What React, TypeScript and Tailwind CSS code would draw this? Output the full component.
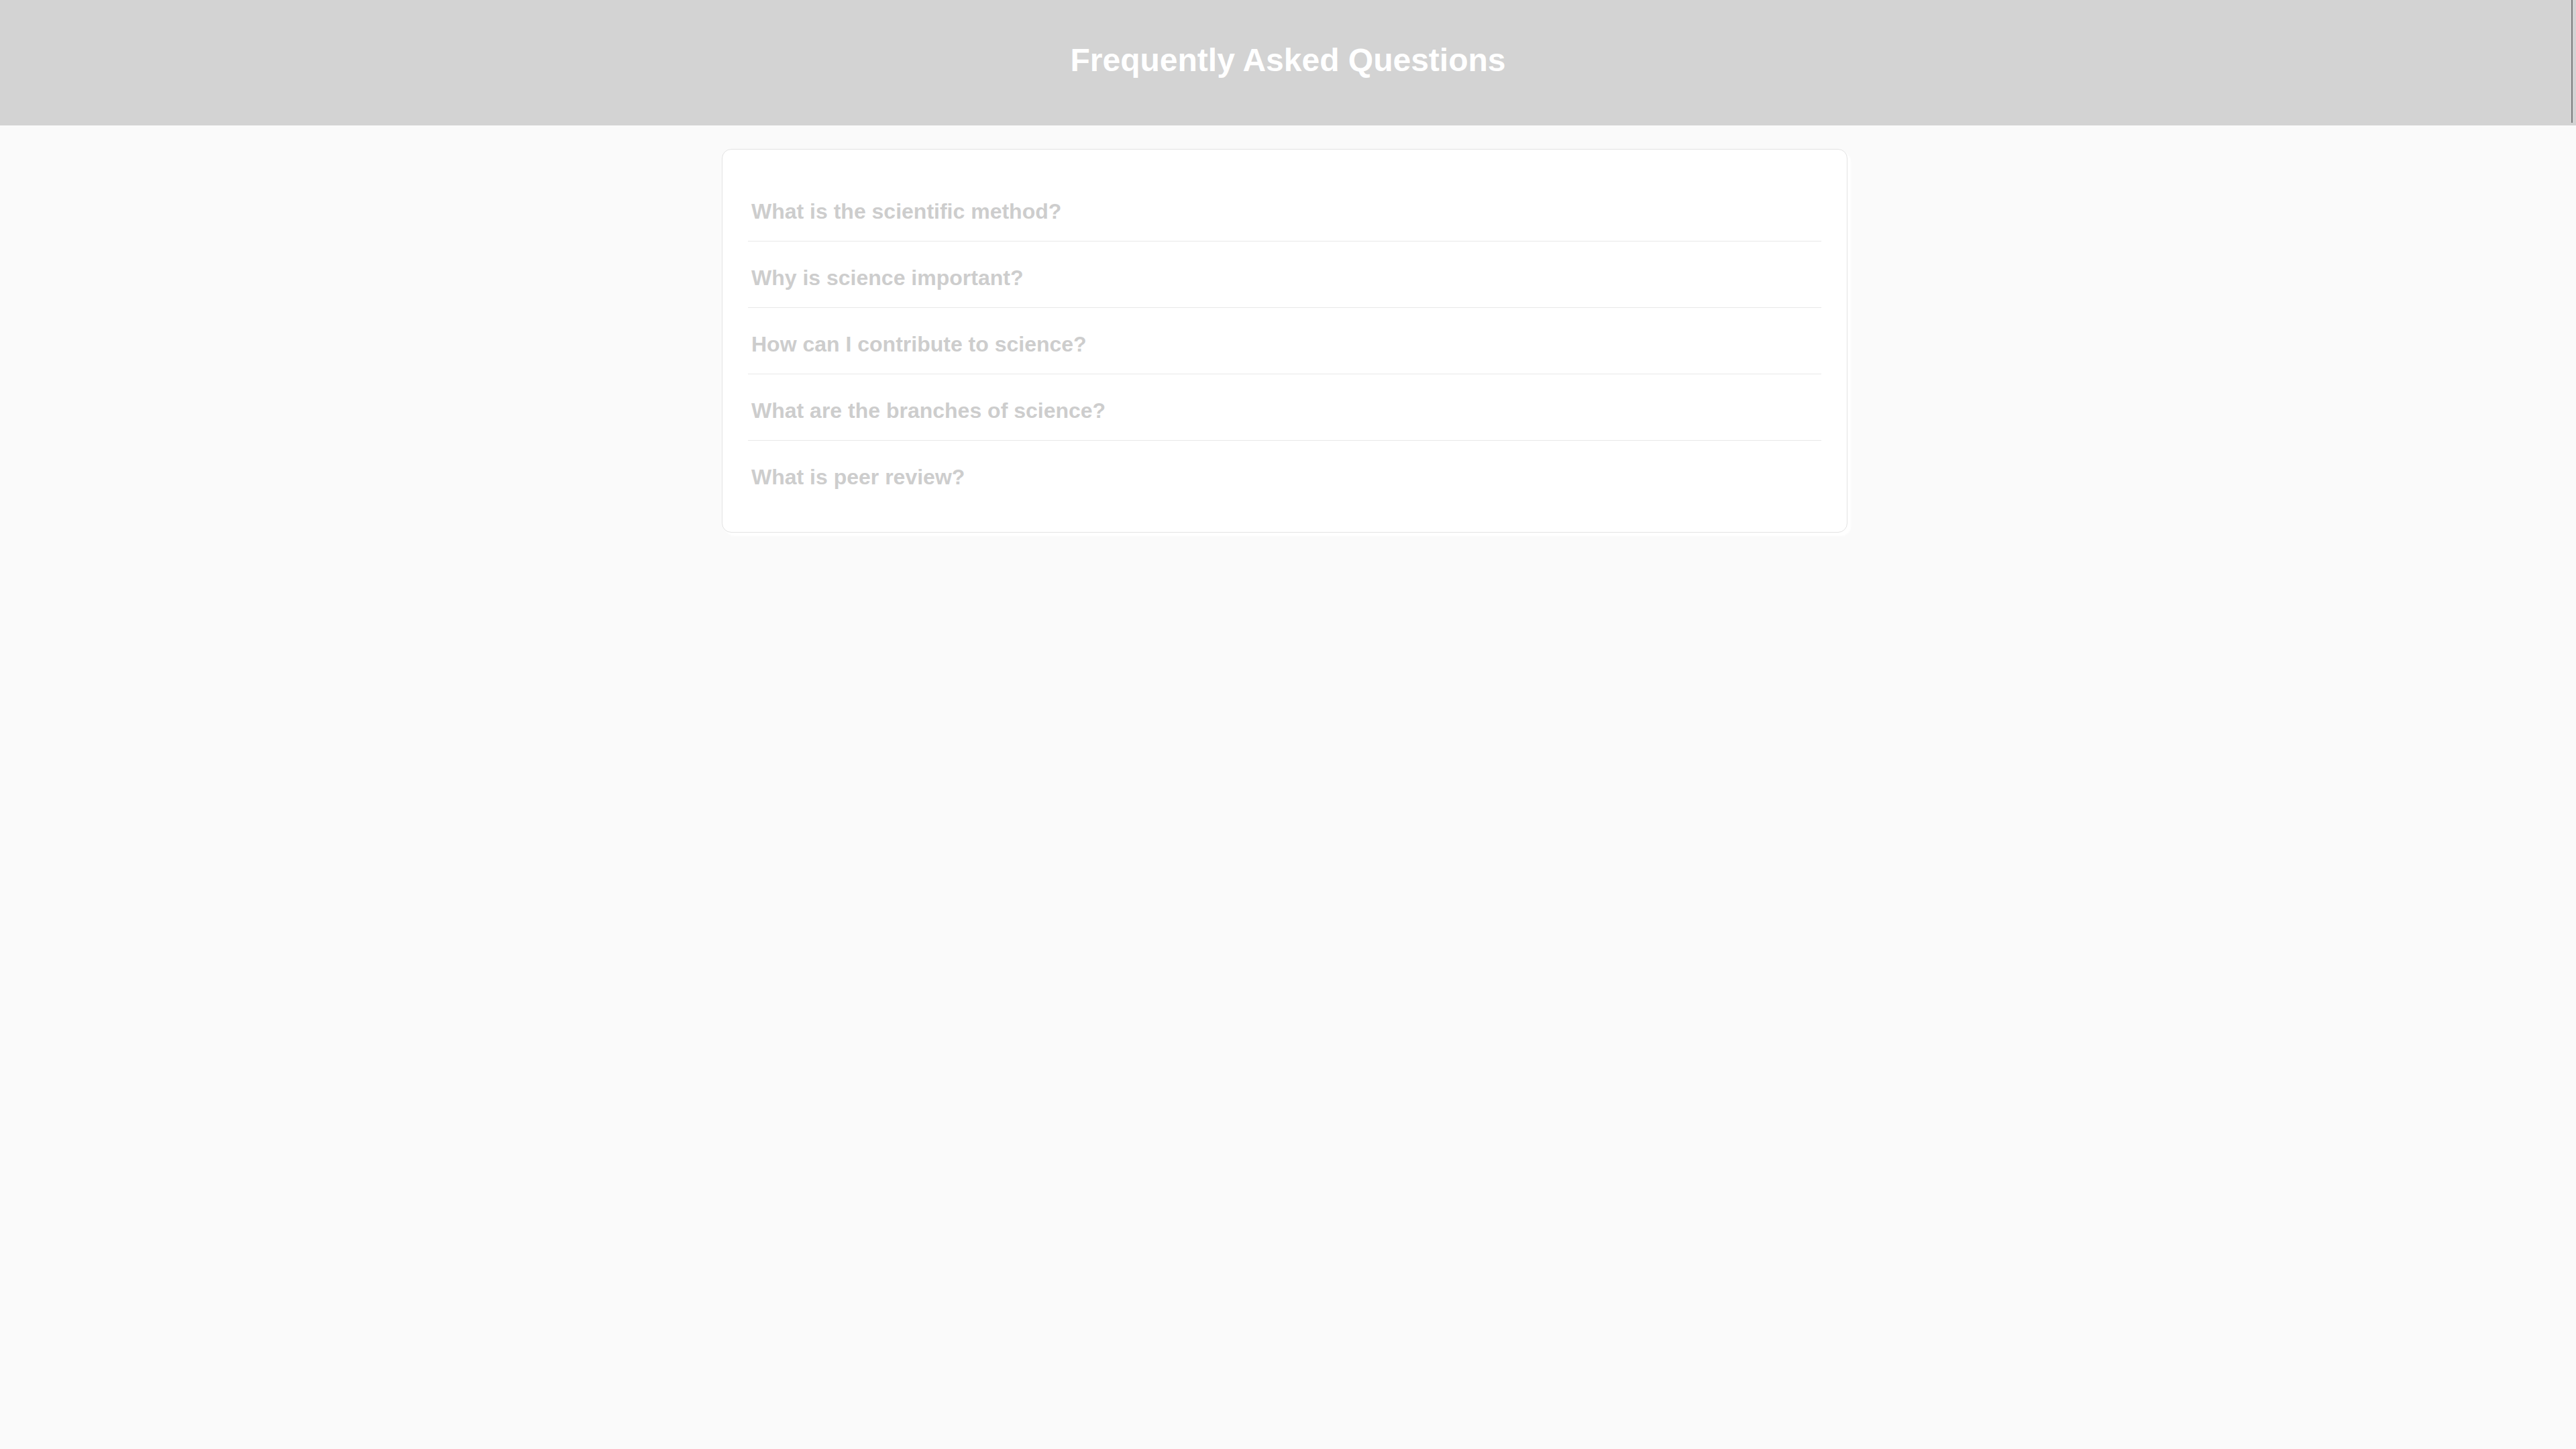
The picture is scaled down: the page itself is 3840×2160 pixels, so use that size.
const questions = [
  'What is the scientific method?',
  'Why is science important?',
  'How can I contribute to science?',
  'What are the branches of science?',
  'What is peer review?',
];

export default function App() {
  return (
    <div className="min-h-screen bg-[#fafafa] font-['Liberation_Sans',Arial,sans-serif]">
      {/* Header */}
      <header className="relative h-[187px] bg-[#d3d3d3] pt-[66px] text-center">
        <h1 className="text-[48px] font-bold leading-[48px] text-white">Frequently Asked Questions</h1>
        <div className="absolute right-[5px] top-0 h-[183px] w-[2px] bg-[#7d7d7d]" />
      </header>

      {/* FAQ card */}
      <main className="mt-[35px] flex justify-center pr-[10px]">
        <div className="w-[1678px] rounded-[14px] border border-[#e3e3e3] bg-white p-[38px] shadow-[5px_5px_3px_#ffffff]">
          {questions.map((q, i) => (
            <div
              key={q}
              className={`pb-[20px] pl-[5px] pt-[30px] ${i < questions.length - 1 ? 'border-b border-[#e8e8e8]' : ''}`}
            >
              <h3 className="text-[32px] font-bold leading-[48px] text-[#cdcdcd]">{q}</h3>
            </div>
          ))}
        </div>
      </main>
    </div>
  );
}
